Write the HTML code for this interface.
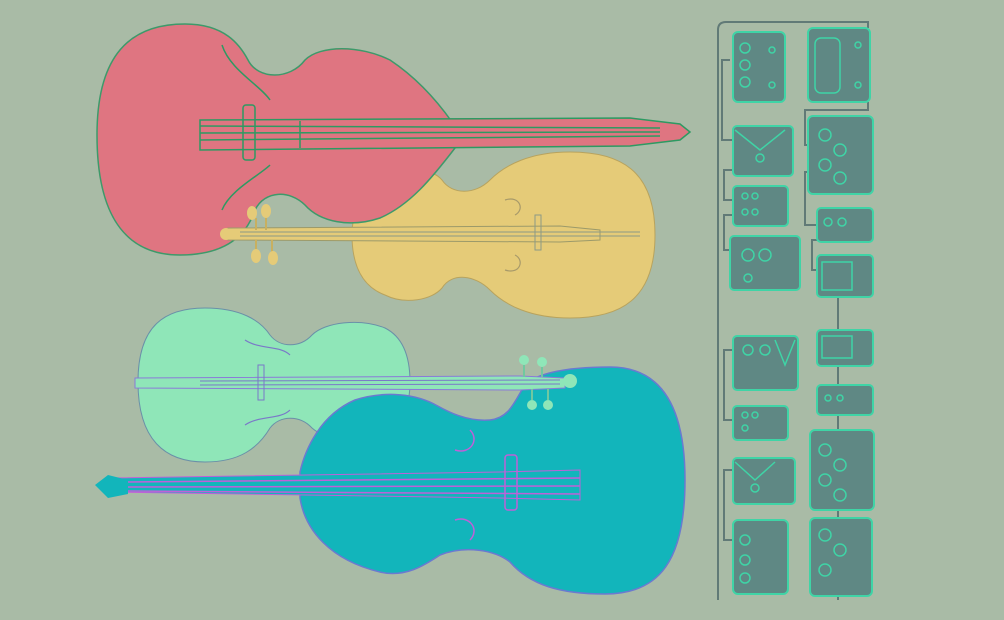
<!DOCTYPE html>
<html><head><meta charset="utf-8"><style>
html,body{margin:0;padding:0;background:#a9bba6;}
svg{display:block}
</style></head><body>
<svg width="1004" height="620" viewBox="0 0 1004 620" xmlns="http://www.w3.org/2000/svg">
<rect width="1004" height="620" fill="#a9bba6"/>
<!-- yellow violin body (behind pink) -->
<path d="M655,235 C655,170 620,152 570,152 C530,152 505,165 490,180 C475,195 452,195 442,180 C432,168 405,165 385,175 C360,188 352,215 352,235 C352,258 358,285 385,295 C405,305 432,300 442,288 C452,272 475,275 490,290 C505,305 530,318 570,318 C620,318 655,300 655,235Z" fill="#e5cb78" stroke="#b8a35e" stroke-width="1"/>
<g stroke="#a89a6a" stroke-width="1.2" fill="none"><path d="M505,200 C520,195 525,210 515,215"/><path d="M505,270 C520,275 525,260 515,255"/></g>
<!-- pink cello -->
<g>
<path d="M97,135 C97,55 130,24 185,24 C225,24 240,45 248,60 C258,80 290,80 305,60 C320,45 360,45 390,60 C420,80 440,105 452,122 L455,124 L455,148 C432,178 410,205 380,218 C350,228 320,222 305,205 C290,190 265,190 255,210 C245,240 220,255 180,255 C125,255 97,215 97,135Z" fill="#df7581" stroke="#3d9a6a" stroke-width="1.5"/>
<path d="M200,120 L630,118 L680,124 L690,132 L680,140 L630,146 L200,150Z" fill="#df7581" stroke="#2d9a62" stroke-width="1.5"/>
<g stroke="#2d9a62" stroke-width="1.5" fill="none">
<line x1="200" y1="126" x2="660" y2="128"/><line x1="200" y1="133" x2="660" y2="132"/><line x1="200" y1="140" x2="660" y2="136"/><line x1="300" y1="121" x2="300" y2="148"/>
<rect x="243" y="105" width="12" height="55" rx="3"/>
<path d="M222,45 C230,70 260,85 270,100"/><path d="M222,210 C230,190 260,175 270,165"/>
</g>
</g>
<!-- yellow neck (over pink) -->
<g>
<path d="M228,228 L560,226 L600,230 L600,240 L560,242 L228,240Z" fill="#e5cb78" stroke="#9c9a6a" stroke-width="1"/>
<g stroke="#8c9a86" stroke-width="1" fill="none"><line x1="240" y1="232" x2="640" y2="232"/><line x1="240" y1="236" x2="640" y2="236"/><rect x="535" y="215" width="6" height="35"/></g>
<circle cx="226" cy="234" r="6" fill="#e5cb78"/>
<line x1="256" y1="218" x2="256" y2="230" stroke="#c8b060" stroke-width="2"/><line x1="266" y1="216" x2="266" y2="230" stroke="#c8b060" stroke-width="2"/>
<line x1="256" y1="240" x2="256" y2="252" stroke="#c8b060" stroke-width="2"/><line x1="272" y1="240" x2="272" y2="252" stroke="#c8b060" stroke-width="2"/>
<ellipse cx="252" cy="213" rx="5" ry="7" fill="#e5cb78"/><ellipse cx="266" cy="211" rx="5" ry="7" fill="#e5cb78"/>
<ellipse cx="256" cy="256" rx="5" ry="7" fill="#e5cb78"/><ellipse cx="273" cy="258" rx="5" ry="7" fill="#e5cb78"/>
</g>
<!-- mint violin body -->
<path d="M138,382 C138,325 165,308 205,308 C240,308 260,320 270,335 C280,348 300,348 312,335 C325,322 360,318 385,328 C405,338 410,360 410,382 C410,402 405,425 385,435 C360,445 325,440 312,428 C300,415 280,415 270,428 C258,448 240,462 205,462 C165,462 138,440 138,382Z" fill="#8fe6b8" stroke="#6a90a8" stroke-width="1"/>
<g stroke="#7a78c8" stroke-width="1.2" fill="none"><path d="M245,340 C260,350 280,345 290,355"/><path d="M245,425 C260,415 280,420 290,410"/></g>
<!-- teal cello -->
<g>
<path d="M685,480 C685,405 660,367 610,367 C560,367 535,375 525,385 C515,400 510,418 490,420 C465,422 445,410 434,404 C410,392 380,392 355,400 C320,415 305,450 300,472 L300,498 C305,530 330,560 380,572 C405,578 425,565 440,555 C465,545 495,550 510,562 C530,585 560,594 605,594 C660,594 685,560 685,480Z" fill="#12b5bb" stroke="#6a7ad0" stroke-width="1.5"/>
<path d="M110,478 L500,472 L580,470 L580,500 L500,498 L110,492Z" fill="#12b5bb" stroke="#c060d8" stroke-width="1"/>
<g stroke="#c060d8" stroke-width="1.5" fill="none"><line x1="120" y1="482" x2="580" y2="478"/><line x1="120" y1="487" x2="580" y2="486"/><line x1="120" y1="491" x2="580" y2="494"/><rect x="505" y="455" width="12" height="55" rx="3"/>
<path d="M470,430 C480,440 470,455 455,450"/><path d="M470,540 C480,530 470,515 455,520"/></g>
<path d="M95,485 L108,475 L128,480 L128,494 L108,498Z" fill="#12b5bb"/>
</g>
<!-- mint neck (over teal) -->
<g>
<path d="M135,378 L520,376 L565,378 L565,388 L520,390 L135,388Z" fill="#8fe6b8" stroke="#8a7ad8" stroke-width="1"/>
<g stroke="#7a78c8" stroke-width="1" fill="none"><line x1="200" y1="381" x2="560" y2="380"/><line x1="200" y1="385" x2="560" y2="384"/><rect x="258" y="365" width="6" height="35"/></g>
<circle cx="570" cy="381" r="7" fill="#8fe6b8"/>
<line x1="524" y1="365" x2="524" y2="377" stroke="#70c8a0" stroke-width="2"/><line x1="542" y1="367" x2="542" y2="377" stroke="#70c8a0" stroke-width="2"/>
<line x1="532" y1="389" x2="532" y2="400" stroke="#70c8a0" stroke-width="2"/><line x1="548" y1="389" x2="548" y2="400" stroke="#70c8a0" stroke-width="2"/>
<circle cx="524" cy="360" r="5" fill="#8fe6b8"/><circle cx="542" cy="362" r="5" fill="#8fe6b8"/>
<circle cx="532" cy="405" r="5" fill="#8fe6b8"/><circle cx="548" cy="405" r="5" fill="#8fe6b8"/>
</g>
<!-- wires -->
<g stroke="#617a77" stroke-width="2" fill="none">
<path d="M718,600 L718,30 Q718,22 726,22 L868,22 L868,28"/>
<path d="M730,60 L722,60 L722,140 L733,140"/>
<path d="M733,170 L724,170 L724,200 L733,200"/>
<path d="M733,215 L724,215 L724,250 L730,250"/>
<path d="M733,350 L724,350 L724,420 L733,420"/>
<path d="M733,470 L724,470 L724,540 L733,540"/>
<path d="M868,102 L868,110 L805,110 L805,145 L810,145"/>
<path d="M810,172 L805,172 L805,225 L817,225"/>
<path d="M817,240 L812,240 L812,270 L817,270"/>
<path d="M838,298 L838,600"/>
</g>
<!-- pedals -->
<g fill="#5f8884" stroke="#3fd4a6" stroke-width="2">
<rect x="733" y="32" width="52" height="70" rx="5"/>
<rect x="733" y="126" width="60" height="50" rx="4"/>
<rect x="733" y="186" width="55" height="40" rx="4"/>
<rect x="730" y="236" width="70" height="54" rx="4"/>
<rect x="733" y="336" width="65" height="54" rx="4"/>
<rect x="733" y="406" width="55" height="34" rx="4"/>
<rect x="733" y="458" width="62" height="46" rx="4"/>
<rect x="733" y="520" width="55" height="74" rx="5"/>
<rect x="808" y="28" width="62" height="74" rx="5"/>
<rect x="808" y="116" width="65" height="78" rx="5"/>
<rect x="817" y="208" width="56" height="34" rx="4"/>
<rect x="817" y="255" width="56" height="42" rx="4"/>
<rect x="817" y="330" width="56" height="36" rx="4"/>
<rect x="817" y="385" width="56" height="30" rx="4"/>
<rect x="810" y="430" width="64" height="80" rx="5"/>
<rect x="810" y="518" width="62" height="78" rx="5"/>
</g>
<g fill="none" stroke="#3fd4a6" stroke-width="1.5">
<circle cx="745" cy="48" r="5"/><circle cx="745" cy="65" r="5"/><circle cx="745" cy="82" r="5"/><circle cx="772" cy="50" r="3"/><circle cx="772" cy="85" r="3"/>
<path d="M735,130 L760,150 L785,130"/><circle cx="760" cy="158" r="4"/>
<circle cx="745" cy="196" r="3"/><circle cx="755" cy="196" r="3"/><circle cx="745" cy="212" r="3"/><circle cx="755" cy="212" r="3"/>
<circle cx="748" cy="255" r="6"/><circle cx="765" cy="255" r="6"/><circle cx="748" cy="278" r="4"/>
<circle cx="748" cy="350" r="5"/><circle cx="765" cy="350" r="5"/><path d="M775,340 L785,365 L795,340"/>
<circle cx="745" cy="415" r="3"/><circle cx="755" cy="415" r="3"/><circle cx="745" cy="428" r="3"/>
<path d="M735,462 L755,480 L775,462"/><circle cx="755" cy="488" r="4"/>
<circle cx="745" cy="540" r="5"/><circle cx="745" cy="560" r="5"/><circle cx="745" cy="578" r="5"/>
<rect x="815" y="38" width="25" height="55" rx="6"/><circle cx="858" cy="45" r="3"/><circle cx="858" cy="85" r="3"/>
<circle cx="825" cy="135" r="6"/><circle cx="840" cy="150" r="6"/><circle cx="825" cy="165" r="6"/><circle cx="840" cy="178" r="6"/>
<circle cx="828" cy="222" r="4"/><circle cx="842" cy="222" r="4"/>
<rect x="822" y="262" width="30" height="28"/>
<rect x="822" y="336" width="30" height="22"/>
<circle cx="828" cy="398" r="3"/><circle cx="840" cy="398" r="3"/>
<circle cx="825" cy="450" r="6"/><circle cx="840" cy="465" r="6"/><circle cx="825" cy="480" r="6"/><circle cx="840" cy="495" r="6"/>
<circle cx="825" cy="535" r="6"/><circle cx="840" cy="550" r="6"/><circle cx="825" cy="570" r="6"/>
</g>
</svg>
</body></html>
